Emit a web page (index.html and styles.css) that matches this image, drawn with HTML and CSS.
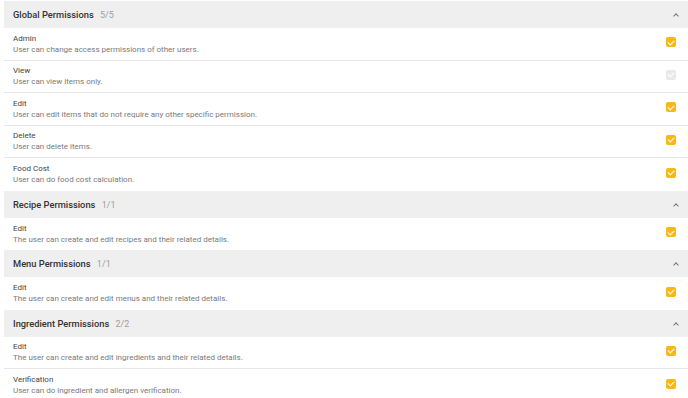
FILE: index.html
```html
<!DOCTYPE html>
<html lang="en">
<head>
    <meta charset="UTF-8">
    <meta name="viewport" content="width=device-width, initial-scale=1.0">
    <title>Permissions</title>
    <link rel="stylesheet" href="styles.css">
</head>
<body>
    <div class="container">
        <section class="group">
            <div class="group-head">
                <h2>Global Permissions <span class="count">5/5</span></h2>
                <span class="chevron"></span>
            </div>
            <ul class="perms">
                <li>
                    <div class="info"><h3>Admin</h3><p>User can change access permissions of other users.</p></div>
                    <span class="check"></span>
                </li>
                <li>
                    <div class="info"><h3>View</h3><p>User can view items only.</p></div>
                    <span class="check disabled"></span>
                </li>
                <li>
                    <div class="info"><h3>Edit</h3><p>User can edit items that do not require any other specific permission.</p></div>
                    <span class="check"></span>
                </li>
                <li>
                    <div class="info"><h3>Delete</h3><p>User can delete items.</p></div>
                    <span class="check"></span>
                </li>
                <li>
                    <div class="info"><h3>Food Cost</h3><p>User can do food cost calculation.</p></div>
                    <span class="check"></span>
                </li>
            </ul>
        </section>
        <section class="group">
            <div class="group-head">
                <h2>Recipe Permissions <span class="count">1/1</span></h2>
                <span class="chevron"></span>
            </div>
            <ul class="perms">
                <li>
                    <div class="info"><h3>Edit</h3><p>The user can create and edit recipes and their related details.</p></div>
                    <span class="check"></span>
                </li>
            </ul>
        </section>
        <section class="group">
            <div class="group-head">
                <h2>Menu Permissions <span class="count">1/1</span></h2>
                <span class="chevron"></span>
            </div>
            <ul class="perms">
                <li>
                    <div class="info"><h3>Edit</h3><p>The user can create and edit menus and their related details.</p></div>
                    <span class="check"></span>
                </li>
            </ul>
        </section>
        <section class="group">
            <div class="group-head">
                <h2>Ingredient Permissions <span class="count">2/2</span></h2>
                <span class="chevron"></span>
            </div>
            <ul class="perms">
                <li>
                    <div class="info"><h3>Edit</h3><p>The user can create and edit ingredients and their related details.</p></div>
                    <span class="check"></span>
                </li>
                <li>
                    <div class="info"><h3>Verification</h3><p>User can do ingredient and allergen verification.</p></div>
                    <span class="check"></span>
                </li>
            </ul>
        </section>
    </div>
</body>
</html>
```

FILE: styles.css
```css
*{
    margin: 0;
    padding: 0;
    box-sizing: border-box;
}
body{
    background: #fff;
    font-family: Roboto, "Noto Sans", sans-serif;
    color: #333;
}
.container{
    padding: 1px 0 0 4px;
}
.group-head{
    display: flex;
    align-items: center;
    justify-content: space-between;
    height: 27px;
    padding: 0 9px;
    background: #efefef;
}
.group-head h2{
    font-size: 9.3px;
    font-weight: 500;
    color: #333;
}
.group-head .count{
    margin-left: 4px;
    font-size: 9px;
    font-weight: 400;
    color: #a0a0a0;
}
.chevron{
    width: 4px;
    height: 4px;
    margin-top: 3px;
    margin-right: 1px;
    border-left: 1.5px solid #777;
    border-top: 1.5px solid #777;
    transform: rotate(45deg);
}
.perms{
    list-style: none;
}
.perms li{
    display: flex;
    align-items: center;
    justify-content: space-between;
    height: 32.5px;
    padding: 0 12px 0 9px;
    border-bottom: 1px solid #e6e6e6;
}
.perms li:last-child{
    border-bottom: none;
}
.info h3{
    font-size: 8px;
    font-weight: 400;
    color: #444;
    line-height: 11px;
}
.info p{
    font-size: 8px;
    color: #7a7a7a;
    line-height: 11px;
}
.check{
    position: relative;
    width: 10px;
    height: 10px;
    margin-top: -3px;
    border-radius: 2px;
    background: #fbb814;
}
.check::after{
    content: "";
    position: absolute;
    left: 3px;
    top: 1.5px;
    width: 3px;
    height: 5px;
    border-right: 1.5px solid #fff;
    border-bottom: 1.5px solid #fff;
    transform: rotate(45deg);
}
.check.disabled{
    background: #e9e9e9;
}
```
